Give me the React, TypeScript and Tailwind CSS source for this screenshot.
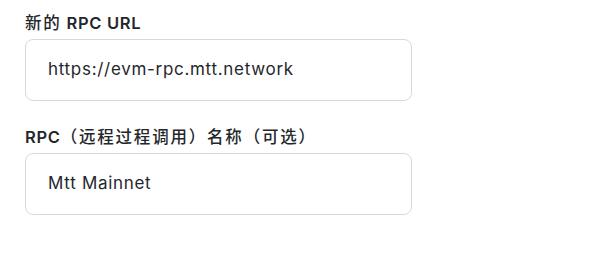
export default function App() {
  const fields = [
    { label: [["新的", false], [" RPC URL", true]], value: "https://evm-rpc.mtt.network" },
    {
      label: [["RPC", true], ["（远程过程调用）名称（可选）", false]],
      value: "Mtt Mainnet",
    },
  ] as { label: [string, boolean][]; value: string }[]

  return (
    <div
      className="w-[594px] h-[263px] bg-white pl-[25px] pt-[13px] flex flex-col gap-[26px]"
      style={{ fontFamily: '"Inter", "Noto Sans CJK SC", sans-serif' }}
    >
      {fields.map((field) => (
        <div key={field.value} className="flex flex-col">
          <label className="text-[16.5px] leading-[20px] text-[#24272a] mb-[6px]">
            {field.label.map(([text, bold]) => (
              <span
                key={text}
                className={bold ? "font-semibold tracking-[0.7px]" : "font-medium tracking-[1.8px]"}
              >
                {text}
              </span>
            ))}
          </label>
          <div className="w-[387px] h-[62px] rounded-[8px] border border-[#d6d9dc] flex items-center px-[22px]">
            <span className="text-[17px] tracking-[0.7px] text-[#24272a]">{field.value}</span>
          </div>
        </div>
      ))}
    </div>
  )
}
